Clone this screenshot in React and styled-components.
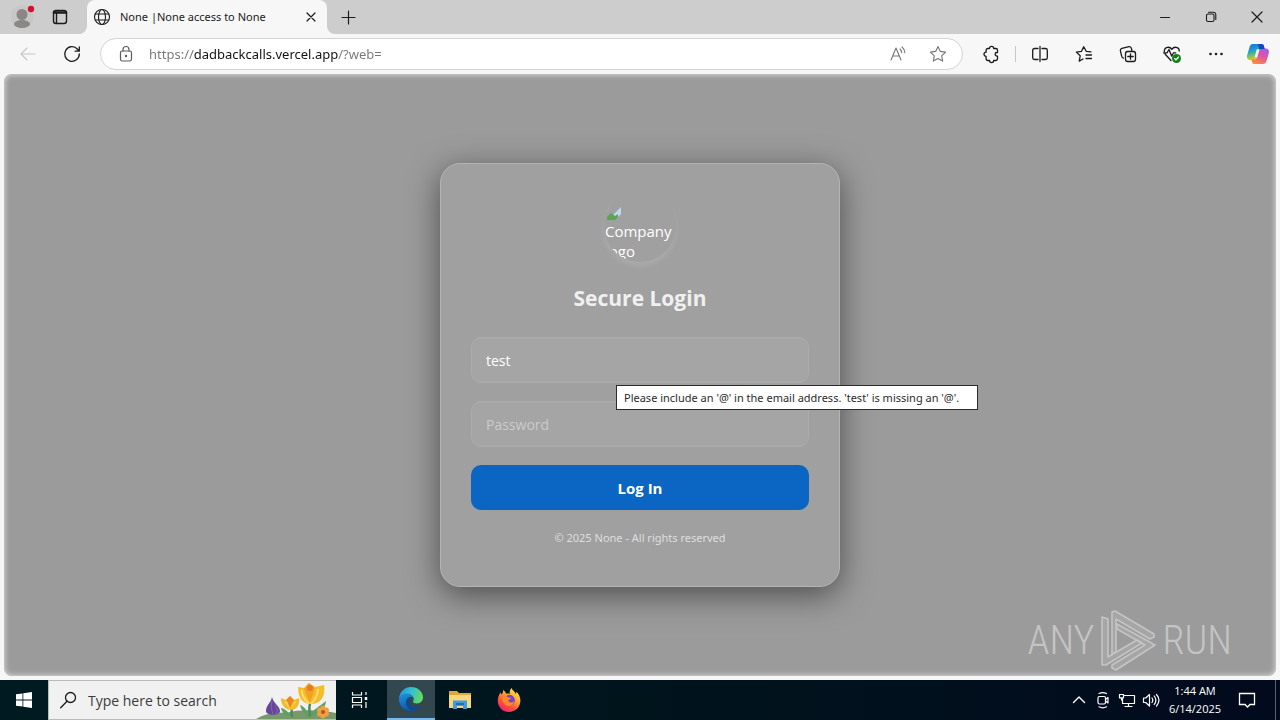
import React from "react";
import styled, { createGlobalStyle, css } from "styled-components";

const ui = `"Open Sans", "Noto Sans", sans-serif`;
const compact = `"Noto Sans", "Open Sans", sans-serif`;

const GlobalStyle = createGlobalStyle`
  *, *::before, *::after { box-sizing: border-box; }
  body { margin: 0; font-family: ${ui}; background: #f7f7f7; }
  button, input { font-family: inherit; }
  button { border: 0; padding: 0; background: none; color: inherit; cursor: pointer; }
  svg { display: block; flex: none; }
`;

const Desktop = styled.div`
  min-height: 100vh;
  display: flex;
  flex-direction: column;
`;

/* ---------- browser chrome ---------- */

const TabStrip = styled.header`
  height: 34px;
  flex: none;
  display: flex;
  background: #f7f7f7;
`;

const StripTools = styled.div`
  width: 87px;
  display: flex;
  align-items: center;
  padding-left: 4px;
  border-bottom-right-radius: 8px;
  background: #cdcdcd;
`;

const ToolButton = styled.button`
  width: ${(p) => p.$w || 36}px;
  height: 34px;
  flex: none;
  display: flex;
  align-items: center;
  justify-content: center;
  color: ${(p) => p.$color || "#1b1b1b"};
`;

const TabSlot = styled.div`
  display: flex;
  background: linear-gradient(#cdcdcd 50%, #f7f7f7 50%);
`;

const Tab = styled.div`
  width: 240px;
  display: flex;
  align-items: center;
  padding-left: 6px;
  background: #f7f7f7;
  border-radius: 8px 8px 0 0;
  font-family: ${compact};
  font-size: 11px;
  line-height: 16px;
  color: #1b1b1b;
`;

const TabTitle = styled.span`
  flex: 1;
  padding-left: 9px;
  white-space: nowrap;
`;

const StripRest = styled.div`
  flex: 1;
  display: flex;
  justify-content: space-between;
  background: #cdcdcd;
  border-bottom-left-radius: 8px;
  padding-left: 3px;
`;

const Row = styled.div`
  display: flex;
  align-items: center;
`;

const Toolbar = styled.nav`
  height: 40px;
  flex: none;
  display: flex;
  align-items: center;
  padding: 0 2px 0 6px;
  background: #f7f7f7;
`;

const AddressBar = styled.form`
  flex: 1;
  height: 32px;
  display: flex;
  align-items: center;
  margin: 0 6px;
  padding: 0 4px 0 7px;
  border: 1px solid #d4d4d4;
  border-radius: 16px;
  background: #fff;
`;

const AddressInput = styled.input`
  flex: 1;
  min-width: 0;
  height: 24px;
  margin-left: 5px;
  padding: 0;
  border: 0;
  outline: 0;
  font-family: ${compact};
  font-size: 13px;
  color: #1b1b1b;
  background: linear-gradient(90deg, #767676 45px, #111 45px 189px, #767676 189px);
  background-clip: text;
  -webkit-background-clip: text;
  -webkit-text-fill-color: transparent;
`;

const Separator = styled.i`
  width: 1px;
  height: 16px;
  margin: 0 2px;
  background: #c8c8c8;
`;

/* ---------- page ---------- */

const Page = styled.main`
  position: relative;
  flex: 1;
  display: flex;
  align-items: center;
  justify-content: center;
  margin: 0 4px 4px;
  padding: 24px;
  border-radius: 8px;
  background: #9b9b9b;
  box-shadow: inset 0 0 5px 1px #d6d6d6;
  color: #fff;
`;

const Card = styled.form`
  width: 100%;
  max-width: 400px;
  padding: 26px 30px 40px;
  display: flex;
  flex-direction: column;
  border: 1px solid #b4b4b4;
  border-radius: 20px;
  background: #a0a0a0;
  box-shadow: 0 8px 32px rgba(0, 0, 0, 0.5);
`;

const Logo = styled.div`
  width: 72px;
  height: 72px;
  align-self: center;
  margin-bottom: 21px;
  padding: 15px 0 0 1px;
  overflow: hidden;
  border-radius: 50%;
  box-shadow: 0 4px 6px rgba(255, 255, 255, 0.12);
  font-size: 15px;
  line-height: 20px;
`;

const Heading = styled.h1`
  margin: 0 0 24px;
  font-size: 21px;
  line-height: 30px;
  font-weight: 700;
  text-align: center;
  color: #f0f0f0;
`;

const Field = styled.div`
  position: relative;
  display: flex;
  margin-bottom: 18px;
`;

const TextBox = styled.input`
  flex: 1;
  min-width: 0;
  height: 46px;
  padding: 1px 14px 0;
  border: 1px solid #acacac;
  border-radius: 10px;
  outline: 0;
  background: #a5a5a5;
  color: #fff;
  font-size: 14px;
  &::placeholder { color: #cbcbcb; }
`;

const Tooltip = styled.div`
  position: absolute;
  z-index: 2;
  top: 48px;
  left: 145px;
  min-width: 362px;
  height: 25px;
  padding: 0 7px;
  border: 1px solid #2b2b2b;
  background: #fff;
  color: #2b2b2b;
  font-family: ${compact};
  font-size: 11px;
  line-height: 23px;
  white-space: nowrap;
`;

const Submit = styled.button`
  height: 45px;
  margin-bottom: 20px;
  border-radius: 10px;
  background: #0a66c2;
  color: #fff;
  font-size: 15px;
  font-weight: 700;
`;

const Copyright = styled.p`
  margin: 0;
  font-family: ${compact};
  font-size: 11px;
  line-height: 16px;
  text-align: center;
  color: #dedede;
`;

const Watermark = styled.div`
  position: absolute;
  right: 44px;
  bottom: 4px;
  display: flex;
  align-items: center;
  gap: 6px;
  color: #c4c4c4;
  font-family: "Roboto Condensed", "Liberation Sans Narrow", "Open Sans Condensed", sans-serif;
  font-size: 40px;
  font-weight: 300;
  line-height: 62px;
`;

/* ---------- taskbar ---------- */

const Taskbar = styled.footer`
  height: 40px;
  flex: none;
  display: flex;
  background: linear-gradient(90deg, #001a21, #00141c 50%, #020a1e);
  color: #fff;
`;

const TaskButton = styled.button`
  width: ${(p) => p.$w || 48}px;
  height: 40px;
  flex: none;
  display: flex;
  align-items: center;
  justify-content: center;
  color: #fff;
  ${(p) => p.$active && css`
    background: #33474f;
    border-bottom: 2px solid #76b9ed;
  `}
`;

const Search = styled.label`
  width: 288px;
  flex: none;
  display: flex;
  align-items: center;
  padding-left: 11px;
  border: 1px solid #b9b9b9;
  border-right: 0;
  background: #f1f1f1;
  color: #1b1b1b;
`;

const SearchInput = styled.input`
  flex: 1;
  min-width: 0;
  margin-left: 10px;
  padding: 0;
  border: 0;
  outline: 0;
  background: none;
  font-size: 14px;
  &::placeholder { color: #3c3c3c; }
`;

const Apps = styled.div`
  flex: 1;
  display: flex;
  gap: 1px;
  margin-left: 3px;
`;

const Clock = styled.time`
  width: 64px;
  font-size: 11px;
  line-height: 18px;
  padding-top: 2px;
  text-align: center;
  white-space: nowrap;
`;

const ShowDesktop = styled.button`
  width: 5px;
  margin-left: 8px;
  border-left: 1px solid #59616e;
`;

/* ---------- icons ---------- */

const Line = ({ size = 20, w = 1.2, children, ...rest }) => (
  <svg width={size} height={size} viewBox={`0 0 ${size} ${size}`} fill="none" stroke="currentColor"
    strokeWidth={w} strokeLinecap="round" strokeLinejoin="round" aria-hidden="true" {...rest}>
    {children}
  </svg>
);

const AccountIcon = () => (
  <svg width="26" height="26" viewBox="0 0 26 26" aria-hidden="true">
    <circle cx="13" cy="13" r="11.500" fill="#c8c7c6" />
    <circle cx="13" cy="10.500" r="5.500" fill="#8b8784" />
    <ellipse cx="13" cy="20" rx="8" ry="4" fill="#8b8784" />
    <circle cx="22" cy="5" r="3.200" fill="#d0132b" />
  </svg>
);
const TabsIcon = () => (
  <Line w={1.4}><rect x="3.500" y="3.500" width="13" height="13" rx="2.500" /><path d="M4 5.500h12" strokeWidth="2.400" /><path d="M6.500 6v10" /></Line>
);
const GlobeIcon = () => (
  <Line size={18} w={1.1}><circle cx="9" cy="9" r="7.500" /><ellipse cx="9" cy="9" rx="3.500" ry="7.500" /><path d="M2.300 6h13.400M2.300 12h13.400" /></Line>
);
const CrossIcon = ({ r = 4 }) => (
  <Line size={16}><path d={`M${8 - r} ${8 - r}L${8 + r} ${8 + r}M${8 + r} ${8 - r}L${8 - r} ${8 + r}`} /></Line>
);
const PlusIcon = () => <Line><path d="M10.500 4v13M4 10.500h13" /></Line>;
const MinimizeIcon = () => <Line><path d="M5.500 10.500h9" strokeWidth="1" /></Line>;
const RestoreIcon = () => (
  <Line w={1.1}><rect x="5.500" y="7" width="7.500" height="7.500" rx="1.500" /><path d="M7.500 5.200h5a2.300 2.300 0 0 1 2.300 2.300v5" /></Line>
);
const BackIcon = () => <Line w={1.1}><path d="M17 10H3M9 4l-6 6 6 6" /></Line>;
const ReloadIcon = () => <Line w={1.3}><path d="M17.300 10A7.300 7.300 0 1 1 15.500 5.200L17.300 7M17.300 3v4.200h-4.200" /></Line>;
const LockIcon = () => (
  <Line w={1.2}><rect x="4.500" y="7" width="11" height="10" rx="1.800" /><path d="M7 7V5.500a3 3 0 0 1 6 0V7" /><circle cx="10" cy="12" r=".6" fill="currentColor" /></Line>
);
const ReadAloudIcon = () => (
  <Line w={1.1}><path d="M3 16L8 4l5 12M4.700 12h6.600M12 5c1 1 1.600 2.200 1.700 3.600M14 3c1.800 1.500 2.700 3.400 2.900 5.700" /></Line>
);
const star = "M10 2.500l2.300 4.900 5.300.7-3.900 3.700 1 5.300L10 14.500l-4.700 2.600 1-5.300-3.900-3.700 5.300-.7z";
const StarIcon = () => <Line w={1.1}><path d={star} /></Line>;
const PuzzleIcon = () => (
  <Line w={1.3}><path d="M8.500 4.500a2.100 2.100 0 0 1 4.200 0h2.100a1.700 1.700 0 0 1 1.700 1.700v2.300h-.6a1.800 1.800 0 0 0 0 3.600h.6v2.700a1.700 1.700 0 0 1-1.700 1.700h-2.100a2.100 2.100 0 0 1-4.200 0H6.800a1.700 1.700 0 0 1-1.700-1.700v-2.400a2.100 2.100 0 0 1 0-4.200v-2a1.700 1.700 0 0 1 1.700-1.700z" /></Line>
);
const SplitIcon = () => (
  <Line w={1.3}><path d="M10 2.500v15M8 4.500H4.500a1.800 1.800 0 0 0-1.800 1.800v7.400a1.800 1.800 0 0 0 1.800 1.800H8M12 4.500h3.500a1.800 1.800 0 0 1 1.800 1.800v7.400a1.800 1.800 0 0 1-1.800 1.800H12" /></Line>
);
const FavoritesIcon = () => (
  <Line w={1.3}><path d="M17 7.800l-4.800-.5L9.700 2.700 7.500 7.300l-5.200.8 3.900 3.700-1 5.300L9 15M12 11h5.500M12 14.500h5.500" /></Line>
);
const CollectionsIcon = () => (
  <Line w={1.3}><path d="M5.300 14.200A3 3 0 0 1 3.600 11.800L2.400 6.800a2 2 0 0 1 1.500-2.400l7-1.700a2 2 0 0 1 2.400 1.500l.6 2.500" /><rect x="7.500" y="7.500" width="10" height="10" rx="2.200" /><path d="M12.500 9.800v5.400M9.800 12.500h5.400" /></Line>
);
const HealthIcon = () => (
  <Line w={1.3}>
    <path d="M9 16.500L3 10M2.300 7.600c0-5 5.600-5.500 7.500-2.200 2-3.300 7.500-2.800 7.500 1.600M1.500 8.800H5l2-3.300 2.700 6.700 1.800-3.400h2.300" />
    <circle cx="14.500" cy="14.500" r="4.500" fill="#13801a" stroke="none" /><path d="M12.600 14.600l1.400 1.300 2.400-2.700" stroke="#fff" />
  </Line>
);
const MoreIcon = () => (
  <Line>{[4.5, 10, 15.5].map((x) => <circle key={x} cx={x} cy="10" r="1.300" fill="currentColor" stroke="none" />)}</Line>
);
const CopilotIcon = () => (
  <svg width="24" height="24" viewBox="0 0 24 24" aria-hidden="true">
    <defs>
      <linearGradient id="coA" x1="0" y1="0" x2=".3" y2="1"><stop stopColor="#126fd6" /><stop offset=".5" stopColor="#24a7c8" /><stop offset=".75" stopColor="#7cc45a" /><stop offset="1" stopColor="#f5c21b" /></linearGradient>
      <linearGradient id="coB" x1=".8" y1="0" x2=".3" y2="1"><stop stopColor="#a45cf0" /><stop offset=".45" stopColor="#dd54a6" /><stop offset="1" stopColor="#ff8a3c" /></linearGradient>
    </defs>
    <path d="M7 2h8.500c1.300 0 2 .8 2.300 1.800l.9 3.200h-3c-1.500 0-2.500.9-2.900 2.300l-1.900 6c-.5 1.800-1.300 2.900-3.200 2.900H4.500C1.500 18.200.6 15.800 1.200 13L3.500 5.200C4.200 3 5 2 7 2z" fill="url(#coA)" />
    <path d="M17 22H8.500c-1.300 0-2-.8-2.300-1.800L5.300 17.500h2.900c1.500 0 2.500-.9 2.900-2.300l2-6.200c.5-1.600 1.300-2.500 3.100-2.500h3.300c3 0 3.900 2.300 3.300 4.800l-2.300 7.500C19.800 21 19 22 17 22z" fill="url(#coB)" />
    <path d="M15.500 2c1.300 0 2 .8 2.300 1.800l.9 3.200h-3c-1 0-1.800.4-2.300 1.100L12 2z" fill="#1746b5" />
    <path d="M10.800 7.200h2.600l-2.300 8H8.600z" fill="#f7f7f7" />
  </svg>
);
const BrokenImageIcon = () => (
  <svg width="16" height="16" viewBox="0 0 16 16" aria-hidden="true">
    <path d="M2 2h14v13H2z" fill="#c3d5f5" />
    <path d="M2 2h14L5 13H2z" fill="#a0a0a0" />
    <path d="M2 15v-3l4-4 4 3 3-2v6z" fill="#5fa355" />
    <path d="M10 15l6-6v6z" fill="#a0a0a0" />
  </svg>
);
const AnyRunMark = () => (
  <svg width="56" height="62" viewBox="0 0 56 62" fill="rgba(225,225,225,.16)" stroke="currentColor" strokeWidth="1.600" strokeLinejoin="round" aria-hidden="true">
    <path d="M1 7l6 2v38l29-17 5 3L5 55H1z" />
    <path d="M11 44V2l3-1 39 23v3l-4 2-34-20v33z" />
    <path d="M16 14l38 21-39 25-4-2v-3l33-20-28-16z" />
  </svg>
);
const WindowsIcon = () => (
  <svg width="16" height="16" viewBox="0 0 16 16" fill="#fff" aria-hidden="true"><path d="M0 2.300l6.500-.9v6.200H0zM7.300 1.300L16 0v7.600H7.300zM0 8.400h6.500v6.200L0 13.700zM7.300 8.400H16V16l-8.700-1.300z" /></svg>
);
const SearchIcon = () => <Line size={18} w={1.3}><circle cx="10.500" cy="6.500" r="5" /><path d="M7 10.300L.7 16.700" /></Line>;
const FlowersArt = () => (
  <svg width="80" height="38" viewBox="0 0 80 38" aria-hidden="true">
    <path d="M0 38c8-5 18-7 30-6 14-4 34-3 50 0v6z" fill="#78996a" />
    <path d="M36 36c-1-6 0-8 0-14M54 36c-1-6-1-14 2-20" stroke="#4a8f55" strokeWidth="2.500" fill="none" />
    <path d="M35 35c-4-6-8-8-10-8 1 5 4 8 10 8zM52 36c-5-4-7-8-8-12 5 2 8 6 8 12zM54 35c3-7 9-9 16-15-1 9-7 14-16 15z" fill="#5da063" />
    <path d="M16 16c1 6 8 9 8 14 0 5-14 5-14 0 0-6 5-8 6-14z" fill="#67459a" /><path d="M16 20c-1 5-1 8 1 13M19 24c3 4 3 6 1 9" stroke="#8268ad" fill="none" />
    <path d="M25 17l5 2 4-4 4 4 5-2c1 8-3 12-8 12s-10-4-10-12z" fill="#f4ba2b" /><path d="M30 19l4-4 4 4-4 8z" fill="#e58a25" /><path d="M31 20l-3 1 6 7zM39 20l-4 7 5-6z" fill="#fbd65f" />
    <path d="M42 6l6 1 5-5 6 4 9-2c2 12-4 19-13 19S42 16 42 6z" fill="#f6bd2a" /><path d="M48 8l5-6 6 5-5 15z" fill="#f0a126" /><path d="M46 9c-1 5 2 9 7 14M62 8c0 6-3 11-7 15" stroke="#fbdc6c" strokeWidth="2" fill="none" /><circle cx="54" cy="7" r="3" fill="#e9772a" />
    {[0, 60, 120, 180, 240, 300].map((a) => <ellipse key={a} cx="67" cy="27.500" rx="2.600" ry="3" fill="#eda144" transform={`rotate(${a} 67 31)`} />)}
    <circle cx="67" cy="31" r="2" fill="#b9521a" />
  </svg>
);
const TaskViewIcon = () => (
  <Line w={1.2} strokeLinecap="butt"><path d="M2.500 2v3h9V2M2.500 18v-3h9v3M2.500 7.500h9v5h-9zM16 2v3M16 12v6" /><path d="M16 7v3" strokeWidth="2.500" /></Line>
);
const EdgeIcon = () => (
  <svg width="24" height="24" viewBox="0 0 24 24" aria-hidden="true">
    <defs>
      <linearGradient id="egA" x1="0" y1=".3" x2="1" y2=".5"><stop stopColor="#2597d8" /><stop offset=".5" stopColor="#35bfcf" /><stop offset="1" stopColor="#65dc59" /></linearGradient>
      <linearGradient id="egB" x1="0" y1="0" x2=".4" y2="1"><stop stopColor="#2193df" /><stop offset="1" stopColor="#0d55a8" /></linearGradient>
    </defs>
    <path d="M0 11.500C.7 4.500 6 0 12 0c7 0 12 5 12 10.300 0 4-3 6.200-6 6.200-2.700 0-4.100-.9-4.100-1.700 0-.6.8-.9.8-2.600 0-2.300-2.300-5.100-6.200-5.100C4 7.100.9 9.300 0 11.500z" fill="url(#egA)" />
    <path d="M0 12c0-3 3.300-5.500 7.500-5.500 3.500 0 6 1.700 7 4-1-.6-2-.9-3-.6-3.500 1.200-4.500 6-2 9 2.500 2.900 7.500 3.300 12.300-.2C19.500 22 16 24 12 24 5 24 0 18.500 0 12z" fill="url(#egB)" />
    <path d="M11.500 9.900c-5 .5-6 6.500-2.500 10.500 2.500 2.700 5 3.500 6.500 3 3-.7 5-2.400 6.300-4.700-6 2.800-11.300.3-11.800-4-.2-2 .4-3.800 1.500-4.800z" fill="#114a8b" />
  </svg>
);
const ExplorerIcon = () => (
  <svg width="22" height="18" viewBox="0 0 22 18" aria-hidden="true">
    <path d="M0 0h8l2 2h12v15H0z" fill="#e0a838" /><path d="M0 4h22v13H0z" fill="#f7d680" />
    <path d="M4 9.500h14V18h-4v-3H8v3H4z" fill="#3f9bdb" /><path d="M7 12h8v2H7z" fill="#1e6fb0" />
  </svg>
);
const FirefoxIcon = () => (
  <svg width="24" height="24" viewBox="0 0 24 24" aria-hidden="true">
    <defs>
      <linearGradient id="ffA" x1=".85" y1="0" x2=".25" y2="1"><stop stopColor="#fff04a" /><stop offset=".4" stopColor="#ffa52b" /><stop offset=".7" stopColor="#ff4f3e" /><stop offset="1" stopColor="#f01f72" /></linearGradient>
    </defs>
    <path d="M14.500 0c1 2.500 3.500 3.500 4.300 6 .6-.7.6-1.600.4-2.600C22 6 23.400 9.300 23.400 12.500 23.400 19 18.500 24 12 24S.8 19 .8 12.700c0-3.500 1.200-6.300 3-8.400 0 1 .2 1.700.7 2.300C5.600 5 6.200 4 6 2c1.600.8 2.700 2.300 3.200 3.700 1.600-.3 2.600-.2 3.600.3C12.300 4 13 1.700 14.500 0z" fill="url(#ffA)" />
    <circle cx="12.500" cy="12.200" r="5.400" fill="#7b40d8" />
    <path d="M5.500 9c2-1.700 4.500-1 5.700.4 1.300.2 2.300.2 3 .5-.2 1.200-2.400 1.400-2.800 2.400-.2 2.200 3.200 3.300 5.600.9-.4 4.300-4.800 5.800-7.900 4C5.800 15.500 4.800 12 5.500 9z" fill="#ff8b22" />
  </svg>
);
const ChevronIcon = () => <Line size={16} w={1.4}><path d="M2.500 10.500L8 5l5.500 5.500" /></Line>;
const MeetIcon = () => <Line size={18} w={1.2}><rect x="4" y="5.500" width="7.500" height="7.500" rx="1.500" /><path d="M11.500 8.500L14 6.500v5.500l-2.500-2M5 2.500c2.500-1.300 5-1.300 7.500 0M5 15.800c2.500 1.300 5 1.300 7.500 0" /></Line>;
const NetworkIcon = () => <Line size={18} w={1.2}><path d="M6.500 4.500h10v8H4.500V8M10.500 12.500v3M7 15.500h7M1.500 3.500h4v3.300h-4zM3.500 7v2" /></Line>;
const VolumeIcon = () => <Line size={18} w={1.2}><path d="M1.500 7v4.500h2.200L7.500 15V3.500L3.700 7zM10 7c1 1.300 1 3 0 4.500M12.200 5c2 2.500 2 6 0 8.500M14.500 3.500c3 3.500 3 8 0 11.500" /></Line>;
const NoticeIcon = () => <Line w={1.3}><path d="M2.500 3.500h15v11h-4.500L10.500 17 8 14.500H2.500z" strokeLinejoin="miter" /></Line>;

export default function App() {
  return (
    <Desktop>
      <GlobalStyle />
      <TabStrip>
        <StripTools>
          <ToolButton aria-label="Profile"><AccountIcon /></ToolButton>
          <ToolButton $w={40} aria-label="Tab actions"><TabsIcon /></ToolButton>
        </StripTools>
        <TabSlot>
          <Tab>
            <GlobeIcon />
            <TabTitle>None |None access to None</TabTitle>
            <ToolButton $w={32} aria-label="Close tab"><CrossIcon /></ToolButton>
          </Tab>
        </TabSlot>
        <StripRest>
          <ToolButton aria-label="New tab"><PlusIcon /></ToolButton>
          <Row>
            <ToolButton $w={46} aria-label="Minimize"><MinimizeIcon /></ToolButton>
            <ToolButton $w={46} aria-label="Restore"><RestoreIcon /></ToolButton>
            <ToolButton $w={46} aria-label="Close window"><CrossIcon r={5} /></ToolButton>
          </Row>
        </StripRest>
      </TabStrip>

      <Toolbar>
        <ToolButton $w={44} $color="#c6c6c6" aria-label="Back"><BackIcon /></ToolButton>
        <ToolButton $w={44} aria-label="Refresh"><ReloadIcon /></ToolButton>
        <AddressBar>
          <ToolButton $color="#5c5c5c" type="button" aria-label="Site information"><LockIcon /></ToolButton>
          <AddressInput aria-label="Address" defaultValue="https://dadbackcalls.vercel.app/?web=" />
          <ToolButton $w={40} $color="#767676" type="button" aria-label="Read aloud"><ReadAloudIcon /></ToolButton>
          <ToolButton $w={40} $color="#767676" type="button" aria-label="Add to favorites"><StarIcon /></ToolButton>
        </AddressBar>
        <ToolButton $w={44} aria-label="Extensions"><PuzzleIcon /></ToolButton>
        <Separator />
        <ToolButton $w={44} aria-label="Split screen"><SplitIcon /></ToolButton>
        <ToolButton $w={44} aria-label="Favorites"><FavoritesIcon /></ToolButton>
        <ToolButton $w={44} aria-label="Collections"><CollectionsIcon /></ToolButton>
        <ToolButton $w={44} aria-label="Browser essentials"><HealthIcon /></ToolButton>
        <ToolButton $w={44} aria-label="More"><MoreIcon /></ToolButton>
        <ToolButton $w={40} aria-label="Copilot"><CopilotIcon /></ToolButton>
      </Toolbar>

      <Page>
        <Card noValidate>
          <Logo><BrokenImageIcon />Company logo</Logo>
          <Heading>Secure Login</Heading>
          <Field>
            <TextBox type="email" aria-label="Email" aria-describedby="email-hint" defaultValue="test" />
            <Tooltip id="email-hint" role="tooltip">
              Please include an '@' in the email address. 'test' is missing an '@'.
            </Tooltip>
          </Field>
          <Field>
            <TextBox type="password" aria-label="Password" placeholder="Password" />
          </Field>
          <Submit type="button">Log In</Submit>
          <Copyright>© 2025 None - All rights reserved</Copyright>
        </Card>
        <Watermark>
          <span>ANY</span>
          <AnyRunMark />
          <span>RUN</span>
        </Watermark>
      </Page>

      <Taskbar>
        <TaskButton aria-label="Start"><WindowsIcon /></TaskButton>
        <Search>
          <SearchIcon />
          <SearchInput type="search" aria-label="Search" placeholder="Type here to search" />
          <FlowersArt />
        </Search>
        <TaskButton aria-label="Task view"><TaskViewIcon /></TaskButton>
        <Apps>
          <TaskButton $active aria-label="Microsoft Edge"><EdgeIcon /></TaskButton>
          <TaskButton aria-label="File Explorer"><ExplorerIcon /></TaskButton>
          <TaskButton aria-label="Firefox"><FirefoxIcon /></TaskButton>
        </Apps>
        <Row>
          <TaskButton $w={24} aria-label="Show hidden icons"><ChevronIcon /></TaskButton>
          <TaskButton $w={24} aria-label="Meet now"><MeetIcon /></TaskButton>
          <TaskButton $w={24} aria-label="Network"><NetworkIcon /></TaskButton>
          <TaskButton $w={24} aria-label="Volume"><VolumeIcon /></TaskButton>
        </Row>
        <Clock>1:44 AM<br />6/14/2025</Clock>
        <TaskButton $w={40} aria-label="Notifications"><NoticeIcon /></TaskButton>
        <ShowDesktop aria-label="Show desktop" />
      </Taskbar>
    </Desktop>
  );
}
